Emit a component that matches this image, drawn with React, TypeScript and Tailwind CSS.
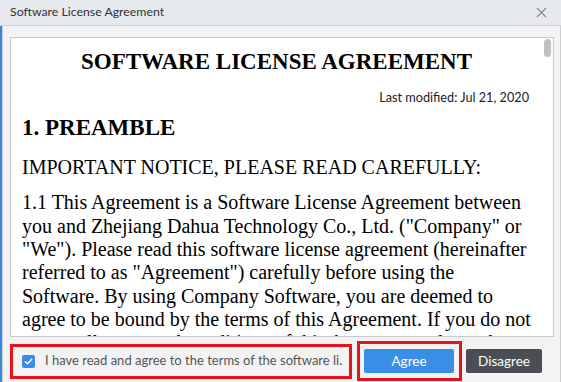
import { X } from "lucide-react";

function Scrollbar() {
  return (
    <div className="w-[10px] shrink-0 pt-[1px]">
      <div className="ml-[1px] h-[18px] w-[7px] rounded-full bg-[#c1c1c1]" />
    </div>
  );
}

function AgreementText() {
  return (
    <div className="flex-1 overflow-hidden pl-[11px] pr-[12px] pt-[10px] text-black [font-family:'Liberation_Serif',serif]">
      <h1 className="text-center text-[23px] font-bold leading-[28px]">
        SOFTWARE LICENSE AGREEMENT
      </h1>
      <p className="mt-[13px] pr-[2px] text-right text-[12.7px] leading-[16px] text-[#222] [font-family:Lato,sans-serif]">
        Last modified: Jul 21, 2020
      </p>
      <h2 className="mt-[9px] text-[23px] font-bold leading-[28px]">1. PREAMBLE</h2>
      <p className="mt-[14px] text-[20px] leading-[23.33px]">
        IMPORTANT NOTICE, PLEASE READ CAREFULLY:
      </p>
      <p className="mt-[12px] text-[20px] leading-[23.33px]">
        1.1 This Agreement is a Software License Agreement between you and
        Zhejiang Dahua Technology Co., Ltd. ("Company" or "We"). Please read
        this software license agreement (hereinafter referred to as
        "Agreement") carefully before using the Software. By using Company
        Software, you are deemed to agree to be bound by the terms of this
        Agreement. If you do not accept all terms and conditions of this
        Agreement, please do not install or use the Software.
      </p>
    </div>
  );
}

function Footer() {
  return (
    <div className="mt-[4px] flex items-center [font-family:Lato,sans-serif]">
      <label className="flex h-[35px] w-[342px] items-center overflow-hidden border-[3px] border-[#e8141c] pl-[9px]">
        <span className="flex h-[13px] w-[13px] shrink-0 items-center justify-center rounded-[2px] bg-[#3c8ce7]">
          <svg width="9" height="9" viewBox="0 0 10 10" fill="none">
            <path d="M1.5 5.2 L4 7.5 L8.5 2.5" stroke="white" strokeWidth="1.6" strokeLinecap="round" strokeLinejoin="round" />
          </svg>
        </span>
        <span className="ml-[10px] whitespace-nowrap text-[13px] text-[#555]">
          I have read and agree to the terms of the software li.
        </span>
      </label>
      <div className="ml-[5px] flex h-[40px] w-[105px] items-center border-[3px] border-[#e8141c] pl-[4px]">
        <button className="h-[24px] w-[90px] rounded-[2px] bg-[#3b8ee6] text-[13.5px] text-white">
          Agree
        </button>
      </div>
      <button className="ml-[4px] h-[24px] w-[76px] rounded-[2px] bg-[#4a4f56] text-[13.5px] text-white">
        Disagree
      </button>
    </div>
  );
}

export default function App() {
  return (
    <div className="flex h-[382px] w-[561px] flex-col overflow-hidden bg-[#f3f3f3]">
      <div className="flex h-[26px] shrink-0 items-center justify-between border-b border-[#cfd3d8] bg-[#e6e9ed] pl-[10px] pr-[11px]">
        <span className="text-[12.3px] text-[#333] [font-family:Lato,sans-serif]">
          Software License Agreement
        </span>
        <X size={17} strokeWidth={1.5} className="text-[#858585]" />
      </div>
      <div className="flex flex-1">
        <div className="w-[2px] bg-[#3a86d6]" />
        <div className="flex flex-1 flex-col border-x border-[#cfcfcf] pl-[7px] pr-[6px] pt-[11px]">
          <div className="flex h-[300px] border border-[#c9c9c9] bg-white">
            <AgreementText />
            <Scrollbar />
          </div>
          <Footer />
        </div>
      </div>
    </div>
  );
}
